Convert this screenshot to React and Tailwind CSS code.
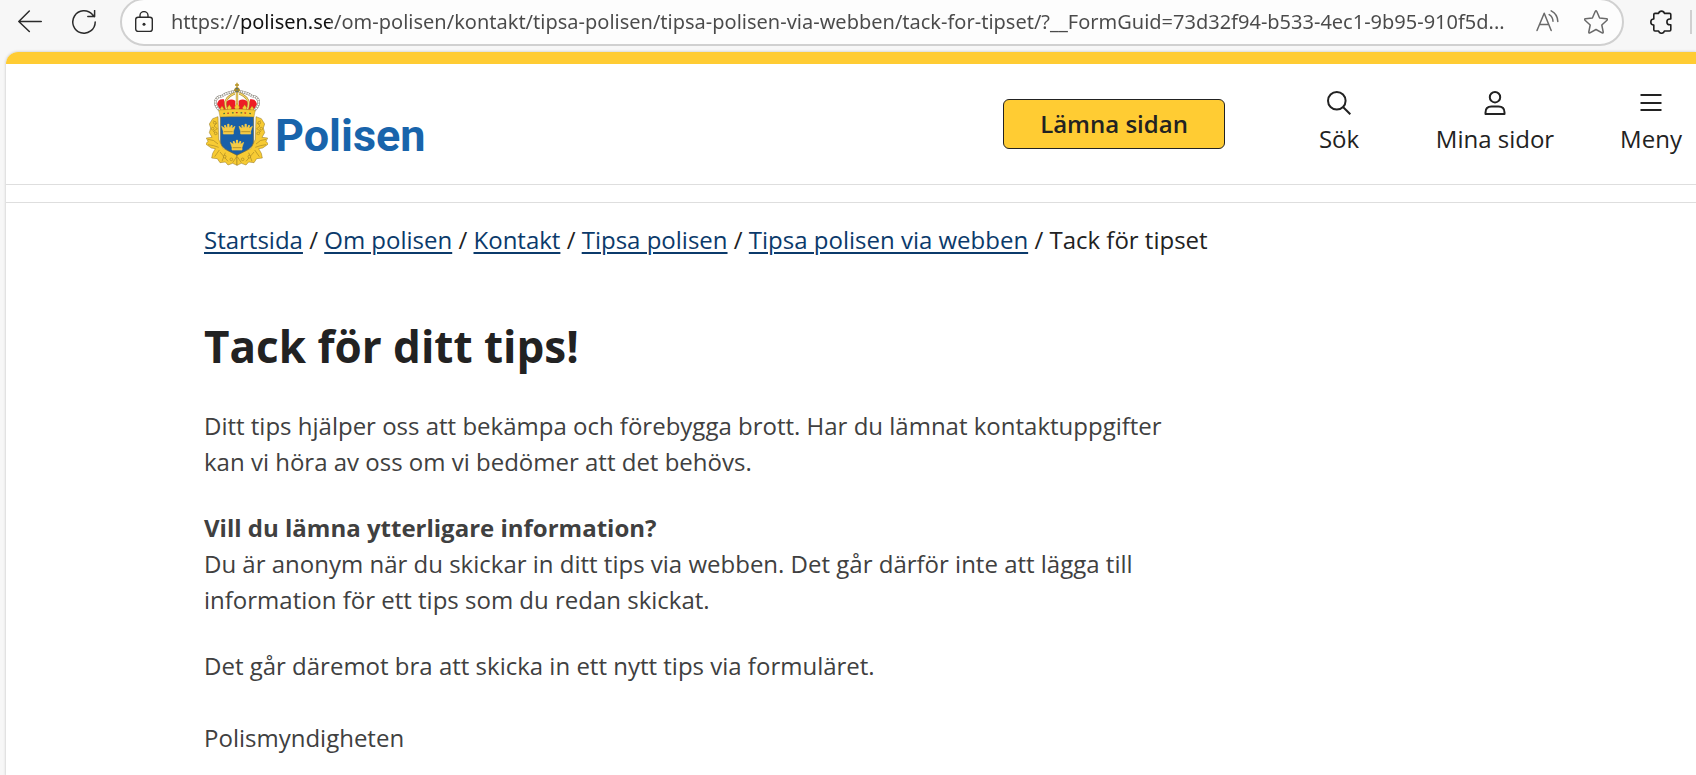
import { useState } from "react";

const crumbs = [
    { label: "Startsida", href: "#startsida" },
    { label: "Om polisen", href: "#om-polisen" },
    { label: "Kontakt", href: "#kontakt" },
    { label: "Tipsa polisen", href: "#tipsa-polisen" },
    { label: "Tipsa polisen via webben", href: "#via-webben" },
];

const BackIcon = () => (
    <svg viewBox="0 0 24 24" className="size-6" fill="none" stroke="currentColor" strokeWidth="1.5" strokeLinecap="round" strokeLinejoin="round">
        <path d="M23.3 11.5H.8M11.3 1 .8 11.5 11.3 21.5" />
    </svg>
);

const ReloadIcon = () => (
    <svg viewBox="0 0 24 24" className="size-6" fill="none" stroke="currentColor" strokeWidth="1.5" strokeLinecap="round" strokeLinejoin="round">
        <path d="M23.2 12A11.2 11.2 0 1 1 20.4 4.6L22.4 6.6M22.6.6V6.6H15.8" />
    </svg>
);

const LockIcon = () => (
    <svg viewBox="0 0 18 22" className="h-[22px] w-[18px] shrink-0" fill="none" stroke="currentColor" strokeWidth="1.4">
        <rect x=".7" y="6.2" width="16.6" height="14.2" rx="2.4" />
        <path d="M5 6V4.6a4 4 0 0 1 8 0V6" />
        <circle cx="9" cy="13.3" r="1.5" fill="currentColor" stroke="none" />
    </svg>
);

const ReadAloudIcon = () => (
    <svg viewBox="0 0 24 24" className="size-6" fill="none" stroke="currentColor" strokeWidth="1.5" strokeLinecap="round" strokeLinejoin="round">
        <path d="M1 20.5 8.2 3.2 15.2 20.5M3.6 14.4h9.2" />
        <path d="M13.2 4.6q3.6 2 3.8 6.6M15.2.9q6.4 3.2 6.6 10.6" />
    </svg>
);

const StarIcon = () => (
    <svg viewBox="0 0 24 24" className="size-6" fill="none" stroke="currentColor" strokeWidth="1.5" strokeLinejoin="round">
        <path d="M11.2 1.5q.8-1.4 1.6 0L15.6 8l6.9.8q1.5.3.5 1.4l-5.2 4.8 1.4 7q.1 1.4-1.1.9L12 19.5l-6.1 3.4q-1.2.5-1.1-.9l1.4-7L1 10.2q-1-1.1.5-1.4L8.4 8z" />
    </svg>
);

const PuzzleIcon = () => (
    <svg viewBox="0 0 24 24" className="size-6" fill="none" stroke="currentColor" strokeWidth="1.6" strokeLinejoin="round">
        <path d="M9.6 3.4a3 3 0 0 1 5.8 0h5.2q1.2 0 1.2 1.2V9h-1a2.9 2.9 0 0 0 0 5.8h1v5q0 1.2-1.2 1.2h-5.2a3 3 0 0 1-5.8 0H6q-1.2 0-1.2-1.2V15a3 3 0 0 1 0-6V4.6q0-1.2 1.2-1.2z" />
    </svg>
);

const SearchIcon = () => (
    <svg viewBox="0 0 24 24" className="size-6" fill="none" stroke="currentColor" strokeWidth="2">
        <circle cx="9.8" cy="9.8" r="8.8" />
        <path d="M16 16l7.3 7.3" />
    </svg>
);

const UserIcon = () => (
    <svg viewBox="0 0 24 24" className="size-6" fill="none" stroke="currentColor" strokeWidth="2" strokeLinejoin="round">
        <circle cx="12" cy="6.2" r="5.2" />
        <path d="M2.5 23v-1.5q0-6 6-6h7q6 0 6 6V23z" />
    </svg>
);

const MenuIcon = () => (
    <svg viewBox="0 0 24 24" className="size-6" fill="none" stroke="currentColor" strokeWidth="2">
        <path d="M1.5 4h21M1.5 12h21M1.5 19h21" />
    </svg>
);

const SmallCrown = ({ x, y }) => (
    <g transform={`translate(${x} ${y})`}>
        <path d="M-20-8-15 7V15H15V7L20-8 11-2 9-10 4-3 0-14-4-3-9-10-11-2z" fill="#f6cb45" stroke="#f6cb45" strokeWidth="2" strokeLinejoin="round" />
        <path d="M-13 8H13" stroke="#9a7a1c" strokeWidth="2" />
        <circle cx="0" cy="-12" r="3.5" fill="#f6cb45" />
        <circle cx="-10" cy="-9" r="3" fill="#f6cb45" />
        <circle cx="10" cy="-9" r="3" fill="#f6cb45" />
    </g>
);

// one half of the oak wreath, mirrored for the other side
const Wreath = () => (
    <g fill="#f7cb34" stroke="#8f7220" strokeWidth="1.5" strokeLinejoin="round">
        <path d="M54 116 38 122 28 138 32 150 28 164 36 178 19 180 24 190 17 198 34 210 46 212 38 226 35 240 52 242 60 254 76 252 84 261 98 256 111 262V228L70 212 56 184z" />
        <path d="M40 128l10 8-8 8 10 8-12 8 12 8M24 184q18 0 30 14M24 200q18 2 32 8M44 236l14-20M66 250l10-26M60 222l24 28M98 254l12-18" fill="none" />
        <circle cx="44" cy="134" r="4" />
        <circle cx="38" cy="152" r="4" />
        <circle cx="47" cy="166" r="4" />
        <circle cx="74" cy="236" r="4" />
        <circle cx="94" cy="244" r="4" />
    </g>
);

const CoatOfArms = () => (
    <svg viewBox="18 12 186 252" className="h-[84px] w-[62px] shrink-0" aria-hidden="true">
        <Wreath />
        <g transform="translate(222 0) scale(-1 1)">
            <Wreath />
        </g>
        <path d="M61 116H161V186C161 212 136 218 111 232C86 218 61 212 61 186z" fill="#185fa8" stroke="#7d6a2a" strokeWidth="2" />
        <SmallCrown x={85} y={153} />
        <SmallCrown x={137} y={153} />
        <SmallCrown x={111} y={201} />
        <path d="M62 98C38 78 46 58 66 54Q88 40 111 40Q134 40 156 54C176 58 184 78 160 98z" fill="#fff" />
        <path d="M62 98 51 79Q54 61 72 64L79 98zM79 98 75 76Q88 58 106 68V98zM116 98V68Q134 58 147 76L143 98zM143 98 150 64Q168 61 171 79L160 98z" fill="#ee1c25" />
        <path d="M60 98C36 76 46 56 66 54Q86 41 106 41M162 98C186 76 176 56 156 54Q136 41 116 41" fill="none" stroke="#8a867c" strokeWidth="8" />
        <path d="M60 98C36 76 46 56 66 54Q86 41 106 41M162 98C186 76 176 56 156 54Q136 41 116 41" fill="none" stroke="#fff" strokeWidth="5" strokeDasharray="5 2" />
        <path d="M80 94Q66 62 104 46M142 94Q156 62 118 46M111 96V44" fill="none" stroke="#a88a2c" strokeWidth="7" />
        <path d="M80 94Q66 62 104 46M142 94Q156 62 118 46M111 96V44" fill="none" stroke="#f3d56a" strokeWidth="4" />
        <g fill="#f6cb34" stroke="#9a7a1c" strokeWidth="1">
            <path d="M66 84l6 9-6 9-6-9zM88 80l7 10-7 10-7-10zM111 76l8 12-8 12-8-12zM134 80l7 10-7 10-7-10zM156 84l6 9-6 9-6-9z" />
            <path d="M56 96Q111 90 166 96L162 117Q111 112 60 117z" stroke="#7d6a2a" />
        </g>
        <path d="M70 107Q111 101 154 107" fill="none" stroke="#4c7a3a" strokeWidth="4" strokeDasharray="5 21" />
        <path d="M82 106Q111 101 150 107" fill="none" stroke="#c8321f" strokeWidth="4" strokeDasharray="5 21" />
        <circle cx="111" cy="36" r="7" fill="#3a6a9c" stroke="#a98518" strokeWidth="3" />
        <path d="M111 14V30M105 21H117M104 36H118" stroke="#b8921e" strokeWidth="4" />
    </svg>
);

const NavItem = ({ icon, label, onClick }) => (
    <button type="button" onClick={onClick} className="flex w-39 cursor-pointer flex-col items-center gap-1.5 text-[24px] leading-[36px]">
        {icon}
        {label}
    </button>
);

function BrowserBar() {
    const [url, setUrl] = useState("https://polisen.se/om-polisen/kontakt/tipsa-polisen/tipsa-polisen-via-webben/tack-for-tipset/?__FormGuid=73d32f94-b533-4ec1-9b95-910f5d...");

    return (
        <div className="flex h-11 items-center pr-1 pl-[18px] text-[#2b2b2b]">
            <button type="button" aria-label="Tillbaka" className="mr-[30px]"><BackIcon /></button>
            <button type="button" aria-label="Uppdatera" className="mr-6"><ReloadIcon /></button>
            <div className="flex h-12 min-w-0 flex-1 items-center rounded-full border-2 border-[#d0d0d0] bg-[#fdfdfd] pr-[14px] pl-[13px]">
                <LockIcon />
                {/* the host name is darker than the rest of the address */}
                <input
                    type="text"
                    aria-label="Adress"
                    value={url}
                    onChange={(e) => setUrl(e.target.value)}
                    className="ml-[18px] min-w-0 flex-1 bg-[linear-gradient(to_right,#4a4a4a_68px,#111_68px,#111_159px,#4a4a4a_159px)] bg-clip-text font-['Noto_Sans',sans-serif] text-[20px] text-transparent caret-black outline-none"
                />
                <div className="flex items-center gap-6 text-[#6a6a6a]">
                    <button type="button" aria-label="Läs upp"><ReadAloudIcon /></button>
                    <button type="button" aria-label="Favorit"><StarIcon /></button>
                </div>
            </div>
            <button type="button" aria-label="Tillägg" className="ml-[25px] text-[#1f1f1f]"><PuzzleIcon /></button>
            <div className="ml-[17px] h-6 w-0.5 bg-[#d0d0d0]"></div>
        </div>
    );
}

export default function App() {
    const [menuOpen, setMenuOpen] = useState(false);

    return (
        <div className="flex min-h-screen flex-col overflow-hidden bg-[#f7f7f7] font-['Open_Sans',sans-serif]">
            <BrowserBar />
            <div className="mt-2 ml-1.5 flex-1 overflow-hidden rounded-tl-xl bg-white text-[#222] shadow-[0_0_3px_#bbb]">
                <div className="h-3 bg-[#ffcc33]"></div>
                <header className="flex h-[121px] items-start justify-between border-b border-[#dedede] pl-[200px]">
                    <a href="#startsida" className="mt-[18px] flex items-center gap-[7px]">
                        <CoatOfArms />
                        <span className="mt-6 font-['Roboto',sans-serif] text-[45px] leading-[52px] font-bold text-[#1864ab]">Polisen</span>
                    </a>
                    <div className="-mr-[33px] flex items-start">
                        <button type="button" className="mt-[35px] mr-9 h-[50px] w-[222px] cursor-pointer rounded-md border border-[#222] bg-[#ffcc33] text-[24px] font-semibold">
                            Lämna sidan
                        </button>
                        <nav className="mt-[27px] flex">
                            <NavItem icon={<SearchIcon />} label="Sök" />
                            <NavItem icon={<UserIcon />} label="Mina sidor" />
                            <NavItem icon={<MenuIcon />} label="Meny" onClick={() => setMenuOpen(!menuOpen)} />
                        </nav>
                    </div>
                </header>
                <div className="h-[18px] border-b border-[#dedede]"></div>
                <main className="pl-[198px] text-[24px] leading-[36px]">
                    <nav aria-label="Brödsmulor" className="mt-[19px]">
                        {crumbs.map((crumb) => (
                            <span key={crumb.href}>
                                <a href={crumb.href} className="text-[#0b3a6b] underline decoration-2 underline-offset-3">{crumb.label}</a>
                                {" / "}
                            </span>
                        ))}
                        <span>Tack för tipset</span>
                    </nav>
                    <h1 className="mt-14 text-[44px] leading-[64px] font-bold">Tack för ditt tips!</h1>
                    <div className="mt-[30px] flex max-w-[980px] flex-col gap-[30px] pb-5 text-[#404040]">
                        <p>Ditt tips hjälper oss att bekämpa och förebygga brott. Har du lämnat kontaktuppgifter kan vi höra av oss om vi bedömer att det behövs.</p>
                        <p>
                            <strong className="font-bold">Vill du lämna ytterligare information?</strong>
                            <br />
                            Du är anonym när du skickar in ditt tips via webben. Det går därför inte att lägga till information för ett tips som du redan skickat.
                        </p>
                        <p>
                            Det går däremot bra att skicka in ett nytt tips via formuläret.
                            <br />
                            <br />
                            Polismyndigheten
                        </p>
                    </div>
                </main>
            </div>
        </div>
    );
}
